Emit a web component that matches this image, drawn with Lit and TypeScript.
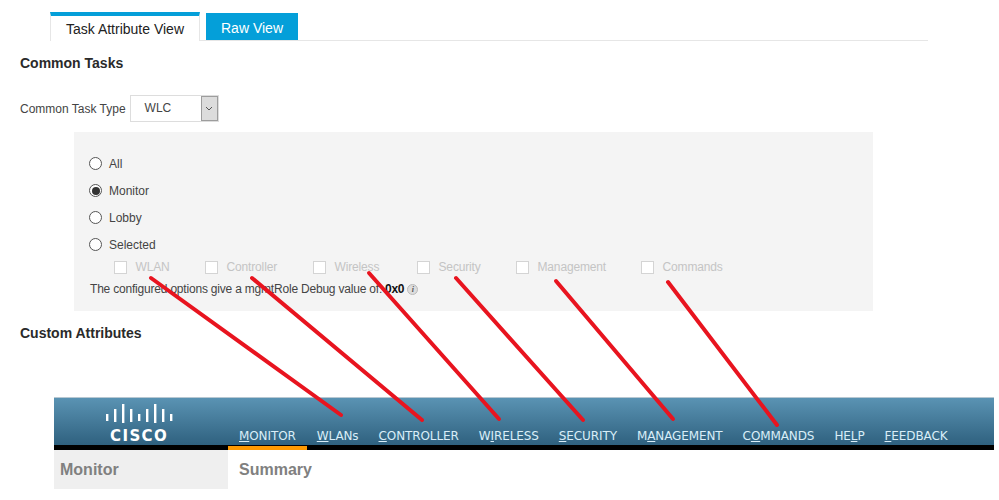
import { LitElement, html, css, svg } from "lit";
import { customElement } from "lit/decorators.js";

const NAV: [string, string, string][] = [
  ["", "M", "ONITOR"],
  ["", "W", "LANs"],
  ["", "C", "ONTROLLER"],
  ["W", "I", "RELESS"],
  ["", "S", "ECURITY"],
  ["M", "A", "NAGEMENT"],
  ["C", "O", "MMANDS"],
  ["HE", "L", "P"],
  ["", "F", "EEDBACK"],
];
const LINES = [
  [151, 278, 341, 415],
  [252, 278, 422, 420],
  [369, 273, 499, 419],
  [456, 278, 583, 420],
  [556, 281, 673, 419],
  [668, 282, 777, 425],
];
const BARS = [
  [1, 10, 7], [9, 5, 13], [17, 0, 19], [25, 5, 13], [33, 10, 7], [41, 5, 13], [49, 0, 19], [57, 5, 13], [65, 10, 7],
];

@customElement("app-root")
export class AppRoot extends LitElement {
  static styles = css`
    :host { display: block; position: relative; width: 999px; height: 500px; overflow: hidden; background: #fff;
      font-family: "Liberation Sans", Arial, sans-serif; color: #333; }
    .top { padding: 12px 71px 0 20px; }
    .tabs { box-sizing: border-box; display: flex; align-items: flex-start; gap: 6px; height: 29px; margin-left: 30px; border-bottom: 1px solid #e6e6e6; }
    .tab { box-sizing: border-box; font-size: 14px; display: flex; align-items: center; justify-content: center; }
    .tab.on { width: 150px; height: 29px; border-top: 4px solid #049fd9; border-left: 1px solid #e6e6e6; border-right: 1px solid #e6e6e6; background: #fff; color: #222; }
    .tab.off { width: 92px; height: 27px; margin-top: 1px; background: #049fd9; color: #fff; padding-top: 2px; }
    h2 { margin: 0; font-size: 14px; font-weight: bold; color: #2a2a2a; line-height: 16px; }
    .ct { margin-top: 14px; }
    .type { display: flex; align-items: center; gap: 4px; margin-top: 24px; font-size: 12px; color: #444; height: 27px; }
    .select { box-sizing: border-box; width: 89px; height: 27px; border: 1px solid #ddd; display: flex; background: #fff; }
    .select .v { flex: 1; padding-left: 14px; line-height: 25px; font-size: 12px; color: #444; }
    .select .arrow { box-sizing: border-box; width: 17px; background: #dcdcdc; border: 1px solid #9d9d9d; display: flex; align-items: center; justify-content: center; }
    .panel { box-sizing: border-box; width: 799px; height: 179px; margin: 10px 0 0 54px; background: #f4f4f4; padding: 18px 15px 0; font-size: 12px; color: #444; }
    .radio { display: flex; align-items: center; gap: 7px; height: 27px; }
    .dot { box-sizing: border-box; width: 13px; height: 13px; border-radius: 50%; border: 1px solid #555; background: #fff; display: flex; align-items: center; justify-content: center; }
    .dot.sel::after { content: ""; width: 8px; height: 8px; border-radius: 50%; background: #333; }
    .checks { display: flex; height: 18px; margin: 0 0 0 25px; color: #c4c4c4; align-items: center; letter-spacing: -0.15px; }
    .check { display: flex; align-items: center; gap: 8.5px; }
    .box { box-sizing: border-box; width: 13px; height: 13px; background: #fff; border: 1px solid #d4d4d4; }
    .w1 { width: 91px; } .w2 { width: 108px; } .w3 { width: 104px; } .w4 { width: 99px; } .w5 { width: 125px; }
    .note { display: flex; align-items: center; margin: 4px 0 0 1px; height: 18px; color: #444; letter-spacing: -0.2px; }
    .note b { color: #111; margin-left: 3px; letter-spacing: -0.3px; }
    .info { box-sizing: border-box; margin-left: 3px; width: 11px; height: 11px; border-radius: 50%; background: #ddd; border: 1px solid #bbb; color: #555; font: italic bold 8px/9px "Liberation Serif", serif; text-align: center; }
    .custom { margin-top: 14px; }
    .banner { position: absolute; left: 54px; top: 397px; width: 940px; }
    .bar { box-sizing: border-box; height: 53px; display: flex; background: linear-gradient(#5a93b3, #2f617f); border-top: 1px solid #b8c8d2; border-bottom: 5px solid #000; }
    .logo { box-sizing: border-box; width: 174px; padding: 6px 0 0 51px; color: #fff; }
    .logo svg { display: block; }
    .word { font: bold 15px/14px "DejaVu Sans", sans-serif; letter-spacing: 1.4px; margin: 5px 0 0 5px; }
    .nav { display: flex; align-items: flex-end; font: 12px "DejaVu Sans", sans-serif; letter-spacing: -0.1px; color: #d9eef8; }
    .item { position: relative; padding: 0 10px 1px; line-height: 16px; height: 16px; white-space: nowrap; }
    .item.act { padding-left: 11px; padding-right: 11px; }
    .item.act::after { content: ""; position: absolute; left: 0; right: 0; bottom: -5px; height: 4px; background: #f90; }
    .sub { display: flex; height: 39px; font-size: 16px; font-weight: bold; color: #808080; }
    .side { box-sizing: border-box; width: 174px; background: #efefef; padding: 11px 0 0 6px; }
    .main { padding: 11px 0 0 11px; }
    .lines { position: absolute; inset: 0; pointer-events: none; }
  `;

  render() {
    return html`
      <div class="top">
        <div class="tabs">
          <div class="tab on">Task Attribute View</div>
          <div class="tab off">Raw View</div>
        </div>
        <h2 class="ct">Common Tasks</h2>
        <div class="type">
          <span>Common Task Type</span>
          <div class="select">
            <div class="v">WLC</div>
            <div class="arrow">
              <svg width="8" height="5" viewBox="0 0 8 5"><path d="M1 1l3 3 3-3" fill="none" stroke="#555"/></svg>
            </div>
          </div>
        </div>
        <div class="panel">
          ${["All", "Monitor", "Lobby", "Selected"].map(
            (r, i) => html`<div class="radio"><span class="dot ${i === 1 ? "sel" : ""}"></span>${r}</div>`
          )}
          <div class="checks">
            ${[["WLAN","w1"],["Controller","w2"],["Wireless","w3"],["Security","w4"],["Management","w5"],["Commands",""]].map(
              ([c, w]) => html`<div class="check ${w}"><span class="box"></span>${c}</div>`
            )}
          </div>
          <div class="note">The configured options give a mgmtRole Debug value of:<b>0x0</b><span class="info">i</span></div>
        </div>
        <h2 class="custom">Custom Attributes</h2>
      </div>
      <div class="banner">
        <div class="bar">
          <div class="logo">
            <svg width="68" height="20" viewBox="0 0 68 20" fill="#fff">
              ${BARS.map(([x, y, h]) => svg`<rect x=${x} y=${y} width="2.4" height=${h}></rect>`)}
            </svg>
            <div class="word">CISCO</div>
          </div>
          <div class="nav">
            ${NAV.map(
              ([a, u, b], i) => html`<div class="item ${i === 0 ? "act" : ""}">${a}<u>${u}</u>${b}</div>`
            )}
          </div>
        </div>
        <div class="sub">
          <div class="side">Monitor</div>
          <div class="main">Summary</div>
        </div>
      </div>
      <svg class="lines" width="999" height="500" viewBox="0 0 999 500">
        ${LINES.map(
          ([a, b, c, d]) => svg`<line x1=${a} y1=${b} x2=${c} y2=${d} stroke="#e8141f" stroke-width="4" stroke-linecap="round"></line>`
        )}
      </svg>
    `;
  }
}
